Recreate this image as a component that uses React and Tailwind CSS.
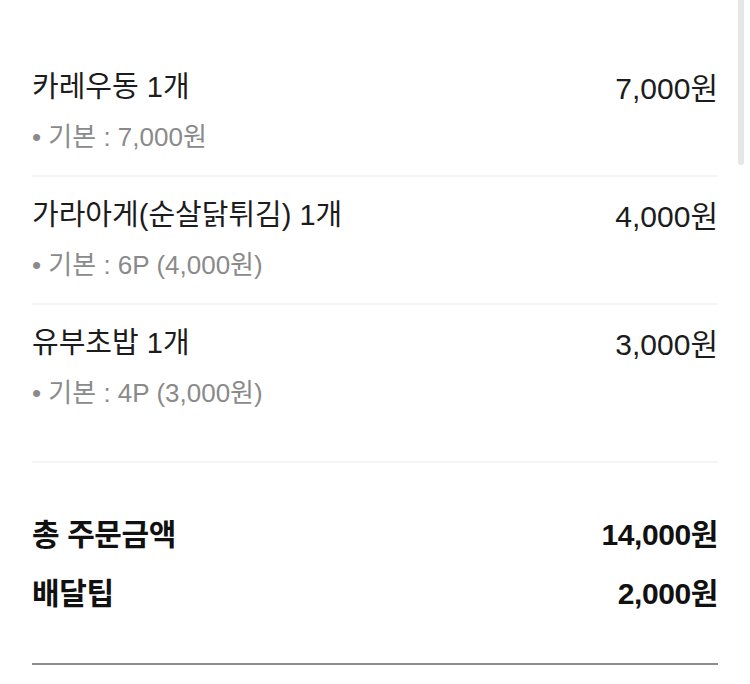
import React from 'react';

const items = [
  { name: '카레우동 1개', option: '• 기본 : 7,000원', price: '7,000원' },
  { name: '가라아게(순살닭튀김) 1개', option: '• 기본 : 6P (4,000원)', price: '4,000원' },
  { name: '유부초밥 1개', option: '• 기본 : 4P (3,000원)', price: '3,000원' },
];

const OrderItem = ({ item, last }) => (
  <div className={last ? 'pt-[21px] pb-[53px]' : 'pt-[21px] pb-[23px] border-b-2 border-[#f4f4f4]'}>
    <div className="flex justify-between items-center h-[36px]">
      <span className="text-[29px] text-[#1c1c1c]">{item.name}</span>
      <span className="text-[30px] text-[#1c1c1c]">{item.price}</span>
    </div>
    <div className="mt-[16px] h-[30px] flex items-center text-[26px] text-[#8a8a8a]">
      {item.option}
    </div>
  </div>
);

const App = () => {
  return (
    <div
      className="relative w-[750px] h-[684px] bg-white overflow-hidden"
      style={{ fontFamily: '"Liberation Sans", "Noto Sans CJK KR", sans-serif' }}
    >
      {/* scroll indicator */}
      <div className="absolute left-[738px] top-0 w-[6px] h-[165px] bg-[#e6e6e6] rounded-b-full" />

      <div className="px-[32px] pt-[49px]">
        <div className="border-b-2 border-[#f4f4f4]">
          {items.map((item, i) => (
            <OrderItem key={i} item={item} last={i === items.length - 1} />
          ))}
        </div>

        <div className="pt-[53px] pb-[52px] border-b-2 border-[#8c8c8c]">
          <div className="flex justify-between items-center h-[36px] font-bold text-[30px] text-[#111] tracking-[-0.4px]">
            <span>총 주문금액</span>
            <span>14,000원</span>
          </div>
          <div className="mt-[23px] flex justify-between items-center h-[36px] font-bold text-[30px] text-[#111] tracking-[-0.4px]">
            <span>배달팁</span>
            <span>2,000원</span>
          </div>
        </div>
      </div>
    </div>
  );
};

export default App;
